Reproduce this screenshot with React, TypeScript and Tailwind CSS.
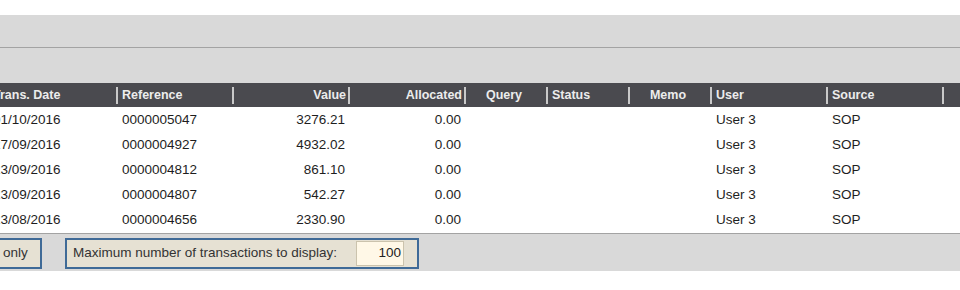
import React from "react";

type Col = { label: string; w: string; align: "left" | "right" | "center"; pad: string; dpad: string };

const cols: Col[] = [
  { label: "Trans. Date", w: "w-[126px]", align: "left", pad: "pl-[1px]", dpad: "pl-[1px]" },
  { label: "Reference", w: "w-[116px]", align: "left", pad: "pl-[4px]", dpad: "pl-[4px]" },
  { label: "Value", w: "w-[116px]", align: "right", pad: "pr-[2px]", dpad: "pr-[5px]" },
  { label: "Allocated", w: "w-[116px]", align: "right", pad: "pr-[2px]", dpad: "pr-[5px]" },
  { label: "Query", w: "w-[82px]", align: "center", pad: "pr-[4px]", dpad: "" },
  { label: "Status", w: "w-[82px]", align: "left", pad: "pl-[4px]", dpad: "pl-[4px]" },
  { label: "Memo", w: "w-[82px]", align: "center", pad: "pr-[4px]", dpad: "" },
  { label: "User", w: "w-[116px]", align: "left", pad: "pl-[4px]", dpad: "pl-[4px]" },
  { label: "Source", w: "w-[116px]", align: "left", pad: "pl-[4px]", dpad: "pl-[4px]" },
];

const rows = [
  ["01/10/2016", "0000005047", "3276.21", "0.00", "", "", "", "User 3", "SOP"],
  ["27/09/2016", "0000004927", "4932.02", "0.00", "", "", "", "User 3", "SOP"],
  ["23/09/2016", "0000004812", "861.10", "0.00", "", "", "", "User 3", "SOP"],
  ["23/09/2016", "0000004807", "542.27", "0.00", "", "", "", "User 3", "SOP"],
  ["23/08/2016", "0000004656", "2330.90", "0.00", "", "", "", "User 3", "SOP"],
];

const alignCls = { left: "text-left", right: "text-right", center: "text-center" };

export default function App() {
  return (
    <div className="w-[960px] h-[290px] overflow-hidden bg-white font-['Liberation_Sans',Arial,sans-serif]">
      <div className="h-[15px]" />
      <div className="h-[32px] bg-[#d9d9d9]" />
      <div className="h-px bg-[#a3a3a3]" />
      <div className="h-[35px] bg-[#d9d9d9]" />

      {/* column header */}
      <div className="h-[24px] bg-[#4a4a4f] overflow-hidden">
        <div className="flex h-full ml-[-8px] whitespace-nowrap">
          {cols.map((c) => (
            <div key={c.label} className={`${c.w} shrink-0 flex items-center h-full`}>
              <span className={`flex-1 ${alignCls[c.align]} ${c.pad} text-[12.5px] font-bold text-[#ececec]`}>
                {c.label}
              </span>
              <div className="w-[2px] h-[17px] bg-[#c9c9c9]" />
            </div>
          ))}
        </div>
      </div>

      {/* rows */}
      <div className="overflow-hidden pt-[1px]">
        {rows.map((r, i) => (
          <div key={i} className="flex h-[25px] ml-[-8px] whitespace-nowrap">
            {cols.map((c, j) => (
              <div
                key={j}
                className={`${c.w} shrink-0 flex items-center h-full ${c.dpad} ${
                  c.align === "right" ? "justify-end" : c.align === "center" ? "justify-center" : "justify-start"
                }`}
              >
                <span className="text-[13.5px] text-[#1e1e1e]">{r[j]}</span>
              </div>
            ))}
          </div>
        ))}
      </div>

      <div className="h-px bg-[#a3a3a3]" />

      {/* bottom options */}
      <div className="h-[37px] bg-[#d9d9d9] flex items-start pt-[4px] gap-[23px]">
        <div className="ml-[-10px] h-[31px] w-[52px] bg-[#e6e1d3] border-2 border-[#3f6a97] flex items-center pl-[11px] text-[13.5px] text-[#333]">
          only
        </div>
        <div className="h-[31px] w-[354px] bg-[#e6e1d3] border-2 border-[#3f6a97] flex items-center pl-[6px] pr-[13px] text-[13.5px] text-[#333]">
          <span className="flex-1">Maximum number of transactions to display:</span>
          <div className="w-[48px] h-[25px] bg-[#fff8e7] border border-[#cbc3ad] flex items-center justify-end pr-[2px] text-[13.5px] text-[#222]">
            100
          </div>
        </div>
      </div>
    </div>
  );
}
